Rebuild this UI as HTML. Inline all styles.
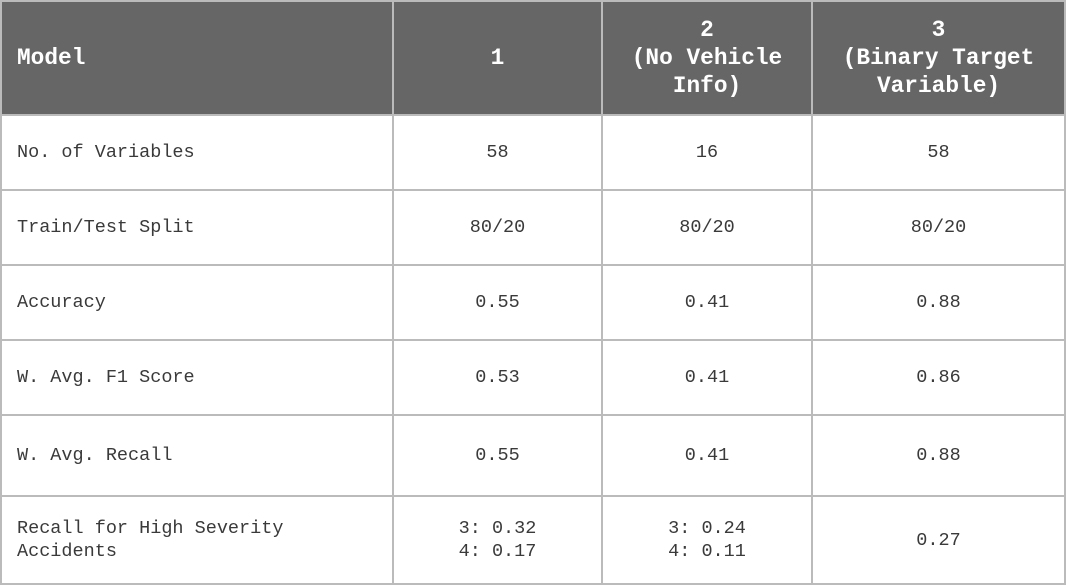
<!DOCTYPE html>
<html><head><meta charset="utf-8"><style>
body{margin:0;width:1067px;height:586px;background:#fff;position:relative;overflow:hidden;font-family:"Liberation Mono",monospace;font-size:18.5px;color:#3a3a3a}
.h{position:absolute;background:#bbb;height:2px}
.v{position:absolute;background:#bbb;width:2px}
.c{position:absolute;display:flex;align-items:center;line-height:23px;white-space:pre}
.hd{color:#fff;font-weight:bold;font-size:22.8px;line-height:28px}
.ctr{justify-content:center;text-align:center}
</style></head><body>
<div style="position:absolute;left:0;top:0;width:1066px;height:115px;background:#666"></div>
<div class="h" style="left:0;top:0;width:1066px"></div>
<div class="h" style="left:0;top:114px;width:1066px"></div>
<div class="h" style="left:0;top:189px;width:1066px"></div>
<div class="h" style="left:0;top:264px;width:1066px"></div>
<div class="h" style="left:0;top:339px;width:1066px"></div>
<div class="h" style="left:0;top:414px;width:1066px"></div>
<div class="h" style="left:0;top:495px;width:1066px"></div>
<div class="h" style="left:0;top:583px;width:1066px"></div>
<div class="v" style="left:0;top:0;height:585px"></div>
<div class="v" style="left:392px;top:0;height:585px"></div>
<div class="v" style="left:601px;top:0;height:585px"></div>
<div class="v" style="left:811px;top:0;height:585px"></div>
<div class="v" style="left:1064px;top:0;height:585px"></div>

<div class="c hd" style="left:17px;top:0;height:116px">Model</div>
<div class="c hd ctr" style="left:394px;width:207px;top:0;height:116px">1</div>
<div class="c hd ctr" style="left:603px;width:208px;top:0;height:116px">2<br>(No Vehicle<br>Info)</div>
<div class="c hd ctr" style="left:813px;width:251px;top:0;height:116px">3<br>(Binary Target<br>Variable)</div>

<div class="c" style="left:17px;top:116px;height:73px">No. of Variables</div>
<div class="c ctr" style="left:394px;width:207px;top:116px;height:73px">58</div>
<div class="c ctr" style="left:603px;width:208px;top:116px;height:73px">16</div>
<div class="c ctr" style="left:813px;width:251px;top:116px;height:73px">58</div>

<div class="c" style="left:17px;top:191px;height:73px">Train/Test Split</div>
<div class="c ctr" style="left:394px;width:207px;top:191px;height:73px">80/20</div>
<div class="c ctr" style="left:603px;width:208px;top:191px;height:73px">80/20</div>
<div class="c ctr" style="left:813px;width:251px;top:191px;height:73px">80/20</div>

<div class="c" style="left:17px;top:266px;height:73px">Accuracy</div>
<div class="c ctr" style="left:394px;width:207px;top:266px;height:73px">0.55</div>
<div class="c ctr" style="left:603px;width:208px;top:266px;height:73px">0.41</div>
<div class="c ctr" style="left:813px;width:251px;top:266px;height:73px">0.88</div>

<div class="c" style="left:17px;top:341px;height:73px">W. Avg. F1 Score</div>
<div class="c ctr" style="left:394px;width:207px;top:341px;height:73px">0.53</div>
<div class="c ctr" style="left:603px;width:208px;top:341px;height:73px">0.41</div>
<div class="c ctr" style="left:813px;width:251px;top:341px;height:73px">0.86</div>

<div class="c" style="left:17px;top:416px;height:79px">W. Avg. Recall</div>
<div class="c ctr" style="left:394px;width:207px;top:416px;height:79px">0.55</div>
<div class="c ctr" style="left:603px;width:208px;top:416px;height:79px">0.41</div>
<div class="c ctr" style="left:813px;width:251px;top:416px;height:79px">0.88</div>

<div class="c" style="left:17px;top:497px;height:86px">Recall for High Severity<br>Accidents</div>
<div class="c ctr" style="left:394px;width:207px;top:497px;height:86px">3: 0.32<br>4: 0.17</div>
<div class="c ctr" style="left:603px;width:208px;top:497px;height:86px">3: 0.24<br>4: 0.11</div>
<div class="c ctr" style="left:813px;width:251px;top:497px;height:86px">0.27</div>
</body></html>
